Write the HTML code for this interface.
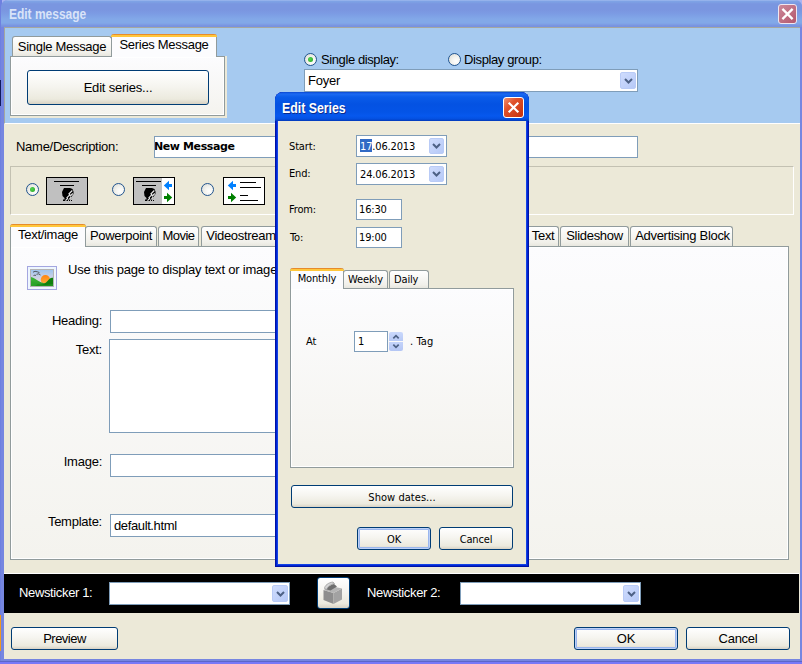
<!DOCTYPE html>
<html>
<head>
<meta charset="utf-8">
<title>Edit message</title>
<style>
*{box-sizing:border-box;margin:0;padding:0}
html,body{width:802px;height:664px;overflow:hidden}
body{position:relative;background:#a9b4f2;font-family:"Liberation Sans",sans-serif;font-size:13px;color:#000}
.abs{position:absolute}
.win{position:absolute;left:1px;top:0;width:801px;height:661px;background:#7686e0;border-radius:7px 7px 0 0;overflow:hidden}
.title{position:absolute;left:0;top:0;width:801px;height:27px;background:linear-gradient(#a0baee 0,#7ea2e5 1.500px,#7a96e0 4px,#7a96e0 10px,#7c9ce4 14px,#82a8e8 19px,#82a8e8 23px,#7892e0 26px,#7892e0 27px)}
.title span{position:absolute;left:8px;top:6px;font-weight:bold;font-size:14px;transform:scaleX(.855);transform-origin:0 0;color:#d9e3f8;white-space:nowrap}
.client{position:absolute;left:3px;top:27px;width:796px;height:632px;background:#ece9d8}
.bluepanel{position:absolute;left:0;top:0;width:796px;height:97px;background:#a6caf0;border-top:1px solid #a5a79f;border-left:1px solid #a5a79f;border-bottom:1px solid #fff}
.lbl{position:absolute;white-space:nowrap;line-height:15px;height:15px}
.t{font-family:"DejaVu Sans Condensed","DejaVu Sans",sans-serif;font-size:11px}
.inp{position:absolute;background:#fff;border:1px solid #7f9db9}
.btn{position:absolute;border:1px solid #003c74;border-radius:3px;background:linear-gradient(#ffffff 0,#f6f5f0 45%,#eceade 85%,#d8d2c4 100%);text-align:center;white-space:nowrap}
.pane{position:absolute;border:1px solid #919b9c;background:linear-gradient(#fcfcfe,#f4f3ee);box-shadow:inset 0 0 0 1px #fff}
.tab{position:absolute;border:1px solid #919b9c;border-bottom:none;border-radius:3px 3px 0 0;background:linear-gradient(#ffffff,#f1f0ea 80%,#e8e7df);white-space:nowrap;text-align:center}
.tab.sel{background:#fcfcfe;border-top:none}
.tab.sel:before{content:"";position:absolute;left:-1px;right:-1px;top:0;height:3px;border-radius:3px 3px 0 0;background:linear-gradient(#e68b2c 0,#e68b2c 33%,#ffc73c 34%,#ffc73c)}
.radio{position:absolute;width:13px;height:13px;border-radius:50%;border:1px solid #21548f;background:radial-gradient(circle at 65% 65%,#ffffff 0,#f4f4f0 40%,#d8d8d0 100%)}
.radio.on:after{content:"";position:absolute;left:3px;top:3px;width:5px;height:5px;border-radius:50%;background:radial-gradient(circle at 40% 40%,#55d551,#21a121)}
.cbtn{position:absolute;width:16px;height:17px;border-radius:2px;border:1px solid #b9cbf6;background:linear-gradient(135deg,#cfdcfd,#b6c9f7)}
.btn.def{box-shadow:inset 0 0 0 1px #bcd0f6,inset 0 0 0 2px #9ab6ee}
.cbtn svg{position:absolute;left:50%;top:50%;margin:-3px 0 0 -4.500px}
</style>
</head>
<body>
<!-- background bits behind the window -->
<div class="abs" style="left:0;top:0;width:2px;height:664px;background:#6e80e0"></div>
<div class="abs" style="left:0;top:80px;width:1px;height:26px;background:#10185a"></div>
<div class="abs" style="left:0;top:615px;width:2px;height:36px;background:#f09a20"></div>
<div class="abs" style="left:0;top:662px;width:802px;height:2px;background:#7878f8"></div>
<div class="abs" style="left:0;top:661px;width:802px;height:1px;background:#5c66c8"></div>

<div class="win">
  <div class="title"><span>Edit message</span></div>
  <!-- close button -->
  <div class="abs" style="left:777px;top:4px;width:19px;height:20px;border-radius:3px;border:1px solid #f0e6f0;background:linear-gradient(135deg,#cc8a9c,#b4566b)">
    <svg width="17" height="18" viewBox="0 0 17 18" style="position:absolute;left:0;top:0"><path d="M3.400 3.900L13.600 14.100M13.600 3.900L3.400 14.100" stroke="#fff" stroke-width="2.300"/></svg>
  </div>

  <div class="client">
    <div class="bluepanel"></div>
    <div class="abs" style="left:0;top:546px;width:795px;height:40px;background:#000;border-top:1px solid #fff"></div>
  </div>
</div>

<!-- ===== main dialog content (page coordinates) ===== -->
<div class="abs" id="main" style="left:0;top:0;width:802px;height:664px;letter-spacing:-.25px">

  <!-- small tab control -->
  <div class="abs" style="left:10px;top:56px;width:217px;height:62px;background:#ece9d8"></div>
  <div class="pane" style="left:10px;top:56px;width:215px;height:60px"></div>
  <div class="tab" style="left:12px;top:36px;width:100px;height:20px;line-height:20px;letter-spacing:-.3px">Single Message</div>
  <div class="tab sel" style="left:111px;top:34px;width:106px;height:23px;line-height:21px;letter-spacing:-.3px">Series Message</div>
  <div class="btn" style="left:27px;top:70px;width:182px;height:35px;line-height:33px;letter-spacing:-.2px">Edit series...</div>

  <!-- display radios -->
  <div class="radio on" style="left:304px;top:53px"></div>
  <div class="lbl" style="left:321px;top:52px;letter-spacing:-.4px">Single display:</div>
  <div class="radio" style="left:448px;top:53px"></div>
  <div class="lbl" style="left:464px;top:52px;letter-spacing:-.38px">Display group:</div>
  <div class="inp" style="left:304px;top:69px;width:334px;height:23px"></div>
  <div class="lbl" style="left:308px;top:73px">Foyer</div>
  <div class="cbtn" style="left:620px;top:72px"><svg width="9" height="6" viewBox="0 0 9 6"><path d="M1 1 L4.5 4.5 L8 1" fill="none" stroke="#4d6185" stroke-width="2"/></svg></div>

  <!-- name -->
  <div class="lbl" style="left:16px;top:139px;letter-spacing:-.27px">Name/Description:</div>
  <div class="inp" style="left:154px;top:136px;width:484px;height:22px;overflow:hidden"><span style="position:absolute;left:-1px;top:3px;font:bold 11px 'DejaVu Sans',sans-serif;letter-spacing:-.4px;white-space:nowrap">New Message</span></div>

  <!-- group box with layout radios -->
  <div class="abs" style="left:10px;top:166px;width:784px;height:49px;border:1px solid;border-color:#c3c1b2 #fff #fff #c3c1b2"></div>
  <div class="radio on" style="left:26px;top:183px"></div>
  <div class="radio" style="left:112px;top:183px"></div>
  <div class="radio" style="left:201px;top:183px"></div>
  <svg class="abs" style="left:46px;top:177px" width="42" height="28" viewBox="0 0 42 28">
    <rect x=".5" y=".5" width="41" height="27" fill="#c0c0c0" stroke="#000"/>
    <path d="M8 4.5H33M14 8.5H28" stroke="#000"/>
    <path d="M18 11L24 11L26.5 12L27.5 14.5L27.5 17L26 19L25.5 21L24 22.5L22 22.5L22 24L17 24L17 22.5L18.5 22.5L18.5 21L16.5 19L16 15L17 13z" fill="#000"/>
    <path d="M26.3 13.500l-3.300 3.300.800 1-2.800 2.800.500 1-2 2M26.8 16.500l-2.800 2.800M25.5 20l-2 2" stroke="#ececec" stroke-width="1.200" fill="none"/>
    <path d="M23 23h1v1h-1zM25 23h1v1h-1z" fill="#000"/>
  </svg>
  <svg class="abs" style="left:133px;top:177px" width="42" height="28" viewBox="0 0 42 28">
    <rect x=".5" y=".5" width="41" height="27" fill="#fff" stroke="#000"/>
    <rect x="1" y="1" width="28" height="26" fill="#c0c0c0"/>
    <path d="M3 4.5H28M9 8.5H23" stroke="#000"/>
    <path d="M13 11L19 11L21.5 12L22.5 14.5L22.5 17L21 19L20.5 21L19 22.5L17 22.5L17 24L12 24L12 22.5L13.5 22.5L13.5 21L11.5 19L11 15L12 13z" fill="#000"/>
    <path d="M21.3 13.500l-3.300 3.300.800 1-2.800 2.800.500 1-2 2M21.8 16.500l-2.800 2.800M20.5 20l-2 2" stroke="#ececec" stroke-width="1.200" fill="none"/>
    <path d="M18 23h1v1h-1zM20 23h1v1h-1z" fill="#000"/>
    <path d="M30.800 8.500l5.200-4.700v3.200h3v3h-3v3.200z" fill="#0080ff"/>
    <path d="M39.200 20.500l-5.200-4.700v3.200h-3v3h3v3.200z" fill="#008000"/>
  </svg>
  <svg class="abs" style="left:223px;top:177px" width="42" height="28" viewBox="0 0 42 28">
    <rect x=".5" y=".5" width="41" height="27" fill="#fff" stroke="#000"/>
    <path d="M4.800 8.500l5.200-4.700v3.200h3v3h-3v3.200z" fill="#0080ff"/>
    <path d="M13.200 20.500l-5.200-4.700v3.200h-3v3h3v3.200z" fill="#008000"/>
    <path d="M17 5.500H33M17 10.500H38M17 18.500H25M17 23.500H35" stroke="#000"/>
  </svg>

  <!-- main tab control -->
  <div class="pane" style="left:10px;top:246px;width:779px;height:314px"></div>
  <div class="tab" style="left:85px;top:226px;width:72px;height:20px;line-height:18px;letter-spacing:-.3px">Powerpoint</div>
  <div class="tab" style="left:158px;top:226px;width:41px;height:20px;line-height:18px;letter-spacing:-.55px">Movie</div>
  <div class="tab" style="left:201px;top:226px;width:80px;height:20px;line-height:18px;letter-spacing:-.3px">Videostream</div>
  <div class="tab" style="left:477px;top:226px;width:82px;height:20px;line-height:18px;letter-spacing:-.3px">Scrolling Text</div>
  <div class="tab" style="left:560px;top:226px;width:69px;height:20px;line-height:18px;letter-spacing:-.3px">Slideshow</div>
  <div class="tab" style="left:630px;top:226px;width:103px;height:20px;line-height:18px;letter-spacing:-.3px;padding-left:2px">Advertising Block</div>
  <div class="tab sel" style="left:10px;top:224px;width:76px;height:23px;line-height:21px;letter-spacing:-.3px">Text/image</div>

  <!-- picture icon -->
  <svg class="abs" style="left:27px;top:266px" width="30" height="24" viewBox="0 0 30 24">
    <defs>
      <linearGradient id="sky" x1="0" y1="0" x2="0" y2="1"><stop offset="0" stop-color="#9cc4f0"/><stop offset=".6" stop-color="#d8d4e0"/><stop offset="1" stop-color="#f0dcd0"/></linearGradient>
      <linearGradient id="sun" x1="0" y1="0" x2="0" y2="1"><stop offset="0" stop-color="#ff8410"/><stop offset="1" stop-color="#ffb040"/></linearGradient>
      <linearGradient id="h1" x1="0" y1="0" x2="1" y2="1"><stop offset="0" stop-color="#3fb83a"/><stop offset="1" stop-color="#1d8f1d"/></linearGradient>
    </defs>
    <rect x=".5" y=".5" width="29" height="23" fill="#eef6fe" stroke="#a4a6e0"/>
    <rect x="3.500" y="3.500" width="23" height="17" fill="url(#sky)" stroke="#b4b4b4"/>
    <circle cx="18.400" cy="13.700" r="4.700" fill="url(#sun)"/>
    <path d="M4 11C7 12 9 13.500 12 15.200S16 17 19 17.500L26 20H4z" fill="url(#h1)"/>
    <path d="M11 18C15 19 18 18 20.500 15S23.500 11.500 26 11.700V20H8z" fill="#0f800f"/>
    <path d="M4 15l8 3 6 1 8-1v2H4z" fill="#2aa02a" opacity=".55"/>
    <path d="M6 6.200l2-.900 2.500.500 2 .900M9.500 8.300l2-.500 2 1.200M6.500 9.500l1.500-.400 1 .500" stroke="#3c3c3c" stroke-width=".800" fill="none"/>
  </svg>
  <div class="lbl" style="left:68px;top:262px;letter-spacing:-.2px">Use this page to display text or images</div>

  <div class="lbl" style="left:20px;top:313px;width:82px;text-align:right">Heading:</div>
  <div class="inp" style="left:110px;top:310px;width:300px;height:23px"></div>
  <div class="lbl" style="left:20px;top:342px;width:82px;text-align:right">Text:</div>
  <div class="inp" style="left:109px;top:339px;width:301px;height:94px"></div>
  <div class="lbl" style="left:20px;top:454px;width:82px;text-align:right">Image:</div>
  <div class="inp" style="left:110px;top:454px;width:300px;height:23px"></div>
  <div class="lbl" style="left:20px;top:514px;width:82px;text-align:right">Template:</div>
  <div class="inp" style="left:110px;top:514px;width:300px;height:23px"></div>
  <div class="lbl" style="left:114px;top:518px;letter-spacing:-.38px">default.html</div>

  <!-- newsticker bar -->
  <div class="lbl" style="left:19px;top:585px;color:#fff;letter-spacing:-.36px">Newsticker 1:</div>
  <div class="inp" style="left:109px;top:582px;width:181px;height:23px"></div>
  <div class="cbtn" style="left:272px;top:585px"><svg width="9" height="6" viewBox="0 0 9 6"><path d="M1 1 L4.5 4.5 L8 1" fill="none" stroke="#4d6185" stroke-width="2"/></svg></div>
  <div class="btn" style="left:317px;top:577px;width:33px;height:32px">
    <svg width="31" height="30" viewBox="0 0 31 30" style="position:absolute;left:0;top:0">
      <path d="M5.500 12l10 3v11l-10-4z" fill="#8e8e8e"/>
      <path d="M15.500 15l8.500-4.500v11l-8.500 4.500z" fill="#a2a2a2"/>
      <path d="M5.500 12l7.500-4 11 2.500-8.500 4.500z" fill="#b4b4b4"/>
      <path d="M6.500 10.500c0-3 4-6 8.500-6.500l1.500 1.500c-4 1-7 3-7.500 6z" fill="#d4d4d4" stroke="#8a8a8a" stroke-width=".6"/>
      <path d="M9 11.500c.5-2.500 3-4.500 7-5.500l3 2.500-6.500 4z" fill="#6e6e6e"/>
    </svg>
  </div>
  <div class="lbl" style="left:367px;top:585px;color:#fff;letter-spacing:-.36px">Newsticker 2:</div>
  <div class="inp" style="left:460px;top:582px;width:181px;height:23px"></div>
  <div class="cbtn" style="left:623px;top:585px"><svg width="9" height="6" viewBox="0 0 9 6"><path d="M1 1 L4.5 4.5 L8 1" fill="none" stroke="#4d6185" stroke-width="2"/></svg></div>

  <!-- bottom buttons -->
  <div class="btn" style="left:11px;top:627px;width:107px;height:23px;line-height:21px;letter-spacing:-.5px">Preview</div>
  <div class="btn def" style="left:574px;top:627px;width:104px;height:23px;line-height:21px">OK</div>
  <div class="btn" style="left:686px;top:627px;width:104px;height:23px;line-height:21px">Cancel</div>
</div>

<!-- ===== Edit Series dialog (page coordinates) ===== -->
<div class="abs t" id="dlg" style="left:275px;top:92px;width:254px;height:475px;background:#0024d4;box-shadow:inset 1px 0 0 #0012a4,inset -1px 0 0 #0012a4,inset 0 -1px 0 #0012a4;border-radius:8px 8px 0 0;overflow:hidden">
  <div class="abs" style="left:0;top:0;width:254px;height:29px;background:linear-gradient(#0a48d2 0,#1c6af2 2px,#0a5ce9 5px,#0452e2 12px,#0454e6 20px,#0658ee 24px,#0450e0 27px,#0238b8 29px)"></div>
  <div class="abs" style="left:7px;top:8px;font:bold 14px 'Liberation Sans',sans-serif;transform:scaleX(.88);transform-origin:0 0;color:#fff;text-shadow:1px 1px 0 #0a2a8a;white-space:nowrap">Edit Series</div>
  <div class="abs" style="left:228px;top:5px;width:21px;height:21px;border-radius:3px;border:1px solid #fff;background:linear-gradient(135deg,#ee9070 0,#e0522c 35%,#c6300c 100%)">
    <svg width="19" height="19" viewBox="0 0 19 19" style="position:absolute;left:0;top:0"><path d="M4.700 4.700L14.300 14.300M14.300 4.700L4.700 14.300" stroke="#fff" stroke-width="2.200"/></svg>
  </div>
  <div class="abs" style="left:2px;top:29px;width:250px;height:444px;border:1px solid #1242e4;border-top:none;background:#ece9d8"></div>
</div>
<div class="abs t" id="dlgc" style="left:0;top:0;width:802px;height:664px;letter-spacing:-.15px">
  <div class="lbl" style="left:289px;top:139px">Start:</div>
  <div class="inp" style="left:356px;top:135px;width:91px;height:22px"></div>
  <div class="abs" style="left:360px;top:139px;width:12px;height:13px;background:#316ac5"></div>
  <div class="lbl" style="left:360px;top:139px;letter-spacing:-.15px"><span style="color:#fff">17</span>.06.2013</div>
  <div class="cbtn" style="left:429px;top:138px;width:15px;height:16px"><svg width="9" height="6" viewBox="0 0 9 6"><path d="M1 1 L4.5 4.5 L8 1" fill="none" stroke="#4d6185" stroke-width="2"/></svg></div>

  <div class="lbl" style="left:289px;top:166px">End:</div>
  <div class="inp" style="left:356px;top:163px;width:91px;height:22px"></div>
  <div class="lbl" style="left:360px;top:167px;letter-spacing:-.15px">24.06.2013</div>
  <div class="cbtn" style="left:429px;top:166px;width:15px;height:16px"><svg width="9" height="6" viewBox="0 0 9 6"><path d="M1 1 L4.5 4.5 L8 1" fill="none" stroke="#4d6185" stroke-width="2"/></svg></div>

  <div class="lbl" style="left:289px;top:202px">From:</div>
  <div class="inp" style="left:356px;top:199px;width:46px;height:21px"></div>
  <div class="lbl" style="left:359px;top:202px">16:30</div>
  <div class="lbl" style="left:290px;top:230px">To:</div>
  <div class="inp" style="left:356px;top:227px;width:46px;height:21px"></div>
  <div class="lbl" style="left:359px;top:230px">19:00</div>

  <div class="pane" style="left:290px;top:288px;width:224px;height:180px"></div>
  <div class="tab" style="left:343px;top:270px;width:45px;height:18px;line-height:17px">Weekly</div>
  <div class="tab" style="left:389px;top:270px;width:40px;height:18px;line-height:17px;text-align:left;padding-left:4px">Daily</div>
  <div class="tab sel" style="left:290px;top:268px;width:54px;height:21px;line-height:21px">Monthly</div>

  <div class="lbl" style="left:306px;top:334px">At</div>
  <div class="inp" style="left:354px;top:331px;width:34px;height:21px"></div>
  <div class="lbl" style="left:358px;top:334px">1</div>
  <div class="abs" style="left:389px;top:332px;width:14px;height:9px;border-radius:2px 2px 0 0;background:linear-gradient(#cad8fc,#b8caf6)"><svg width="14" height="9" viewBox="0 0 14 9" style="position:absolute;left:0;top:0"><path d="M4.300 6.300L7 3.600L9.700 6.300" fill="none" stroke="#4d6185" stroke-width="1.700"/></svg></div>
  <div class="abs" style="left:389px;top:342px;width:14px;height:9px;border-radius:0 0 2px 2px;background:linear-gradient(#c4d3fa,#b4c6f4)"><svg width="14" height="9" viewBox="0 0 14 9" style="position:absolute;left:0;top:0"><path d="M4.300 2.700L7 5.400L9.700 2.700" fill="none" stroke="#4d6185" stroke-width="1.700"/></svg></div>
  <div class="lbl" style="left:410px;top:334px;letter-spacing:.1px">. Tag</div>

  <div class="btn" style="left:291px;top:485px;width:222px;height:23px;line-height:23px;letter-spacing:.05px">Show dates...</div>
  <div class="btn def" style="left:357px;top:527px;width:74px;height:23px;line-height:23px">OK</div>
  <div class="btn" style="left:439px;top:527px;width:74px;height:23px;line-height:23px">Cancel</div>
</div>

</body>
</html>
